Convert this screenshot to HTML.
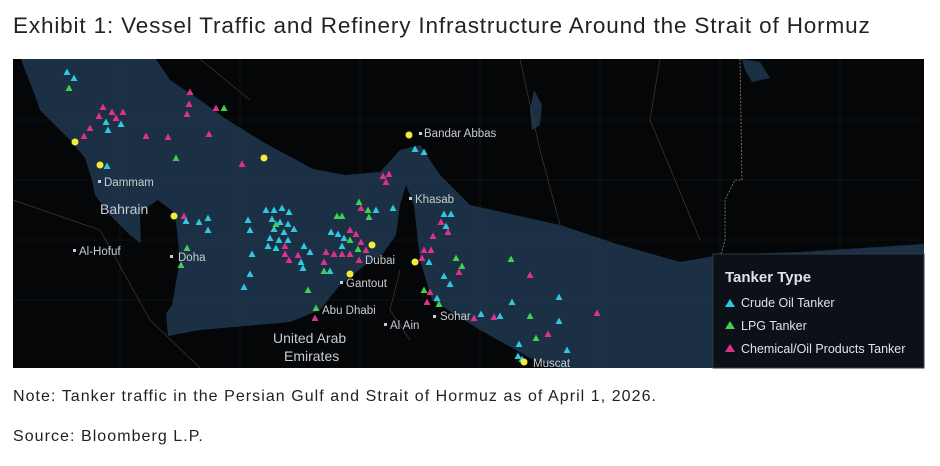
<!DOCTYPE html>
<html><head><meta charset="utf-8"><style>
body{margin:0;background:#fff;width:940px;height:466px;overflow:hidden;font-family:"Liberation Sans",sans-serif;}
.t{position:absolute;left:13px;top:13px;font-size:22.5px;color:#222;white-space:nowrap;letter-spacing:0.85px}
.n{position:absolute;left:13px;font-size:16px;color:#222;white-space:nowrap;letter-spacing:1.05px}
svg{position:absolute;left:0;top:0}
</style></head><body>
<div class="t">Exhibit 1: Vessel Traffic and Refinery Infrastructure Around the Strait of Hormuz</div>
<svg width="940" height="466" viewBox="0 0 940 466">
<defs>
<symbol id="c" viewBox="-4 -4 8 8"><polygon points="0,-3.5 3.5,3 -3.5,3" fill="#2fc8e0"/></symbol>
<symbol id="g" viewBox="-4 -4 8 8"><polygon points="0,-3.5 3.5,3 -3.5,3" fill="#3fd14f"/></symbol>
<symbol id="m" viewBox="-4 -4 8 8"><polygon points="0,-3.5 3.5,3 -3.5,3" fill="#e0308f"/></symbol>
</defs>
<rect x="13" y="59" width="911" height="309" fill="#050607"/>
<polygon fill="#1c3045" points="21,59 156,59 170,80 200,100 226,119 263,142 313,169 345,175 380,172 400,150 420,145 440,175 470,205 560,225 620,245 680,262 720,255 800,252 924,244 924,368 560,368 530,358 480,330 432,300 420,260 414,205 406,185 400,205 396,235 382,255 365,265 340,285 320,310 290,322 200,330 168,336 165,300 150,250 130,235 110,215 95,195 92,180 85,158 70,140 55,125 40,110 33,90 25,70"/>
<polygon fill="#050607" points="140,212 158,200 175,213 180,260 172,305 160,322 150,292 141,250"/>
<polygon fill="#1c3045" points="534,90 542,105 540,125 532,130 530,110"/>
<polygon fill="#1c3045" points="742,59 760,62 770,78 752,82 745,70"/>
<g stroke="#2a3a48" stroke-width="0.6" opacity="0.5" fill="none">
<path d="M13,120 L924,120 M13,180 L924,180 M13,240 L924,240 M13,300 L924,300 M120,59 V368 M240,59 V368 M360,59 V368 M480,59 V368 M600,59 V368 M720,59 V368 M840,59 V368"/>
</g>
<path d="M740,59 L742,180 L735,180 L725,200 L725,240 L720,258" stroke="#888" stroke-width="0.8" stroke-dasharray="2,1.5" fill="none"/>
<g fill="none" stroke="#3a3a3a" stroke-width="0.7">
<path d="M520,59 L540,150 L560,225"/><path d="M660,59 L650,120 L700,240"/><path d="M200,59 L250,100"/><path d="M13,200 L100,230 L150,320 L200,368"/><path d="M400,270 L390,310 L410,340"/>
</g>
<g>
<use href="#c" x="63" y="68" width="8" height="8"/><use href="#c" x="70" y="74" width="8" height="8"/><use href="#g" x="65" y="84" width="8" height="8"/>
<use href="#m" x="99" y="103" width="8" height="8"/><use href="#m" x="95" y="112" width="8" height="8"/><use href="#m" x="108" y="108" width="8" height="8"/><use href="#m" x="112" y="114" width="8" height="8"/><use href="#m" x="119" y="108" width="8" height="8"/><use href="#c" x="102" y="118" width="8" height="8"/><use href="#c" x="117" y="120" width="8" height="8"/><use href="#c" x="104" y="126" width="8" height="8"/><use href="#m" x="86" y="124" width="8" height="8"/><use href="#m" x="80" y="132" width="8" height="8"/>
<use href="#m" x="186" y="88" width="8" height="8"/><use href="#m" x="185" y="100" width="8" height="8"/><use href="#m" x="183" y="110" width="8" height="8"/><use href="#m" x="212" y="104" width="8" height="8"/><use href="#g" x="220" y="104" width="8" height="8"/>
<use href="#m" x="142" y="132" width="8" height="8"/><use href="#m" x="164" y="133" width="8" height="8"/><use href="#m" x="205" y="130" width="8" height="8"/><use href="#g" x="172" y="154" width="8" height="8"/><use href="#m" x="238" y="160" width="8" height="8"/><use href="#c" x="103" y="162" width="8" height="8"/>
<use href="#m" x="180" y="212" width="8" height="8"/><use href="#c" x="182" y="217" width="8" height="8"/><use href="#c" x="195" y="218" width="8" height="8"/><use href="#c" x="204" y="214" width="8" height="8"/><use href="#c" x="204" y="226" width="8" height="8"/><use href="#g" x="183" y="244" width="8" height="8"/><use href="#g" x="177" y="261" width="8" height="8"/>
<use href="#c" x="244" y="216" width="8" height="8"/><use href="#c" x="246" y="226" width="8" height="8"/><use href="#c" x="248" y="250" width="8" height="8"/><use href="#c" x="246" y="270" width="8" height="8"/><use href="#c" x="240" y="283" width="8" height="8"/>
<use href="#c" x="262" y="206" width="8" height="8"/><use href="#c" x="270" y="206" width="8" height="8"/><use href="#c" x="278" y="204" width="8" height="8"/><use href="#c" x="285" y="208" width="8" height="8"/><use href="#c" x="268" y="215" width="8" height="8"/><use href="#c" x="276" y="218" width="8" height="8"/><use href="#c" x="284" y="220" width="8" height="8"/><use href="#c" x="290" y="225" width="8" height="8"/><use href="#c" x="270" y="225" width="8" height="8"/><use href="#c" x="280" y="228" width="8" height="8"/><use href="#c" x="266" y="234" width="8" height="8"/><use href="#c" x="275" y="236" width="8" height="8"/><use href="#c" x="284" y="236" width="8" height="8"/><use href="#g" x="272" y="220" width="8" height="8"/><use href="#c" x="264" y="242" width="8" height="8"/><use href="#c" x="272" y="244" width="8" height="8"/><use href="#m" x="281" y="242" width="8" height="8"/>
<use href="#m" x="281" y="250" width="8" height="8"/><use href="#m" x="285" y="256" width="8" height="8"/><use href="#m" x="294" y="251" width="8" height="8"/><use href="#c" x="297" y="258" width="8" height="8"/><use href="#c" x="300" y="242" width="8" height="8"/><use href="#c" x="306" y="248" width="8" height="8"/><use href="#c" x="299" y="264" width="8" height="8"/>
<use href="#g" x="333" y="212" width="8" height="8"/><use href="#g" x="338" y="212" width="8" height="8"/><use href="#c" x="327" y="228" width="8" height="8"/><use href="#c" x="334" y="230" width="8" height="8"/><use href="#c" x="340" y="234" width="8" height="8"/><use href="#m" x="346" y="226" width="8" height="8"/><use href="#m" x="352" y="230" width="8" height="8"/><use href="#g" x="346" y="236" width="8" height="8"/><use href="#c" x="338" y="242" width="8" height="8"/><use href="#m" x="357" y="238" width="8" height="8"/><use href="#g" x="354" y="245" width="8" height="8"/><use href="#m" x="362" y="246" width="8" height="8"/><use href="#m" x="322" y="248" width="8" height="8"/><use href="#m" x="330" y="250" width="8" height="8"/><use href="#m" x="338" y="250" width="8" height="8"/><use href="#m" x="346" y="250" width="8" height="8"/><use href="#m" x="320" y="258" width="8" height="8"/><use href="#m" x="355" y="256" width="8" height="8"/><use href="#g" x="320" y="267" width="8" height="8"/><use href="#c" x="326" y="267" width="8" height="8"/><use href="#g" x="304" y="286" width="8" height="8"/>
<use href="#g" x="355" y="198" width="8" height="8"/><use href="#m" x="357" y="204" width="8" height="8"/><use href="#g" x="364" y="206" width="8" height="8"/><use href="#c" x="372" y="206" width="8" height="8"/><use href="#g" x="365" y="213" width="8" height="8"/><use href="#c" x="389" y="204" width="8" height="8"/>
<use href="#m" x="379" y="172" width="8" height="8"/><use href="#m" x="385" y="170" width="8" height="8"/><use href="#m" x="382" y="178" width="8" height="8"/><use href="#c" x="411" y="145" width="8" height="8"/><use href="#c" x="420" y="148" width="8" height="8"/>
<use href="#g" x="312" y="304" width="8" height="8"/><use href="#m" x="311" y="314" width="8" height="8"/>
<use href="#c" x="440" y="210" width="8" height="8"/><use href="#c" x="447" y="210" width="8" height="8"/><use href="#m" x="437" y="218" width="8" height="8"/><use href="#c" x="442" y="222" width="8" height="8"/><use href="#m" x="444" y="228" width="8" height="8"/><use href="#m" x="429" y="232" width="8" height="8"/><use href="#m" x="420" y="246" width="8" height="8"/><use href="#m" x="427" y="246" width="8" height="8"/><use href="#m" x="418" y="254" width="8" height="8"/><use href="#c" x="425" y="258" width="8" height="8"/><use href="#g" x="452" y="254" width="8" height="8"/><use href="#g" x="458" y="262" width="8" height="8"/><use href="#m" x="455" y="268" width="8" height="8"/><use href="#c" x="440" y="272" width="8" height="8"/><use href="#c" x="446" y="280" width="8" height="8"/><use href="#g" x="420" y="286" width="8" height="8"/><use href="#m" x="426" y="288" width="8" height="8"/><use href="#c" x="433" y="294" width="8" height="8"/><use href="#m" x="423" y="298" width="8" height="8"/><use href="#g" x="435" y="300" width="8" height="8"/>
<use href="#g" x="507" y="255" width="8" height="8"/><use href="#m" x="526" y="271" width="8" height="8"/><use href="#c" x="508" y="298" width="8" height="8"/><use href="#c" x="477" y="310" width="8" height="8"/><use href="#m" x="470" y="314" width="8" height="8"/><use href="#m" x="490" y="313" width="8" height="8"/><use href="#c" x="496" y="312" width="8" height="8"/><use href="#g" x="526" y="312" width="8" height="8"/><use href="#c" x="555" y="293" width="8" height="8"/><use href="#c" x="555" y="317" width="8" height="8"/><use href="#m" x="593" y="309" width="8" height="8"/><use href="#m" x="544" y="330" width="8" height="8"/><use href="#g" x="532" y="334" width="8" height="8"/><use href="#c" x="515" y="340" width="8" height="8"/><use href="#c" x="563" y="346" width="8" height="8"/><use href="#c" x="514" y="352" width="8" height="8"/><use href="#c" x="518" y="355" width="8" height="8"/>
</g>
<g fill="#f5ec3a">
<circle cx="75" cy="142" r="3.5"/><circle cx="100" cy="165" r="3.5"/><circle cx="174" cy="216" r="3.5"/><circle cx="264" cy="158" r="3.5"/><circle cx="409" cy="135" r="3.5"/><circle cx="372" cy="245" r="3.5"/><circle cx="350" cy="274" r="3.5"/><circle cx="415" cy="262" r="3.5"/><circle cx="524" cy="362" r="3.5"/>
</g>
<g fill="#c8ccd0" font-family="Liberation Sans,sans-serif" font-size="11.5">
<rect x="419" y="132" width="3" height="3"/><text x="424" y="137">Bandar Abbas</text>
<rect x="98" y="180" width="3" height="3"/><text x="104" y="186">Dammam</text>
<text x="100" y="214" font-size="14">Bahrain</text>
<rect x="73" y="249" width="3" height="3"/><text x="79" y="255">Al-Hofuf</text>
<rect x="170" y="255" width="3" height="3"/><text x="178" y="261">Doha</text>
<rect x="409" y="197" width="3" height="3"/><text x="415" y="203">Khasab</text>
<text x="365" y="264">Dubai</text>
<rect x="340" y="281" width="3" height="3"/><text x="346" y="287">Gantout</text>
<text x="322" y="314">Abu Dhabi</text>
<rect x="384" y="323" width="3" height="3"/><text x="390" y="329">Al Ain</text>
<rect x="433" y="315" width="3" height="3"/><text x="440" y="320">Sohar</text>
<text x="533" y="367">Muscat</text>
<text x="273" y="343" font-size="14">United Arab</text>
<text x="284" y="361" font-size="14">Emirates</text>
</g>
<rect x="713" y="254" width="211" height="114" fill="#0b1117" stroke="#2c3a46" stroke-width="1"/>
<g font-family="Liberation Sans Narrow,Liberation Sans,sans-serif" fill="#dfe3e6">
<text x="725" y="282" font-size="15" font-weight="bold">Tanker Type</text>
<polygon points="730,299 735,307 725,307" fill="#2fc8e0"/><text x="741" y="307" font-size="12.5">Crude Oil Tanker</text>
<polygon points="730,321 735,329 725,329" fill="#3fd14f"/><text x="741" y="330" font-size="12.5">LPG Tanker</text>
<polygon points="730,344 735,352 725,352" fill="#e0308f"/><text x="741" y="353" font-size="12.5">Chemical/Oil Products Tanker</text>
</g>
</svg>
<div class="n" style="top:388px">Note: Tanker traffic in the Persian Gulf and Strait of Hormuz as of April 1, 2026.</div>
<div class="n" style="top:428px">Source: Bloomberg L.P.</div>
</body></html>
